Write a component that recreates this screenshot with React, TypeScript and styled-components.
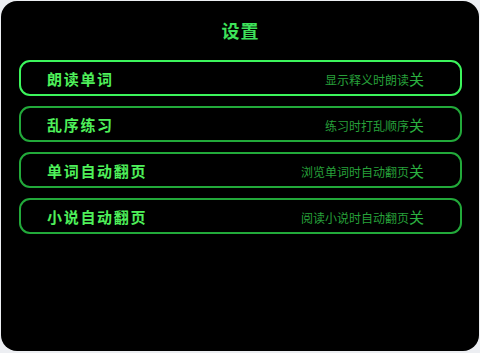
import React from "react";
import styled, { createGlobalStyle } from "styled-components";

const Global = createGlobalStyle`
  html, body { margin: 0; padding: 0; background: #eceef2; }
  body { font-family: "Noto Sans CJK SC", "Noto Sans", sans-serif; }
`;

const Panel = styled.div`
  box-sizing: border-box;
  margin: 1px;
  width: 478px;
  height: 350px;
  background: #000;
  border-radius: 16px;
  padding: 16px 17px 0 18px;
  display: flex;
  flex-direction: column;
`;

const Title = styled.h1`
  margin: 0 0 17px 0;
  text-align: center;
  font-size: 18px;
  line-height: 26px;
  font-weight: 700;
  letter-spacing: 1px;
  color: #3ee25a;
`;

const List = styled.div`
  display: flex;
  flex-direction: column;
  gap: 10px;
`;

const Row = styled.div<{ $active?: boolean }>`
  box-sizing: border-box;
  height: 36px;
  border: 2px solid ${(p) => (p.$active ? "#3cf55c" : "#22a93a")};
  border-radius: 11px;
  display: flex;
  align-items: center;
  justify-content: space-between;
  padding: 0 36px 0 26px;
`;

const Label = styled.span`
  font-size: 15px;
  font-weight: 700;
  color: #4ef05a;
  letter-spacing: 1.7px;
`;

const Desc = styled.span`
  font-size: 12px;
  color: #27a03a;
  display: flex;
  align-items: baseline;
`;

const State = styled.span`
  font-size: 15px;
  color: #2bb040;
`;

const items = [
  { label: "朗读单词", desc: "显示释义时朗读" },
  { label: "乱序练习", desc: "练习时打乱顺序" },
  { label: "单词自动翻页", desc: "浏览单词时自动翻页" },
  { label: "小说自动翻页", desc: "阅读小说时自动翻页" },
];

export default function App() {
  return (
    <>
      <Global />
      <Panel>
        <Title>设置</Title>
        <List>
          {items.map((it, i) => (
            <Row key={it.label} $active={i === 0}>
              <Label>{it.label}</Label>
              <Desc>
                {it.desc}
                <State>关</State>
              </Desc>
            </Row>
          ))}
        </List>
      </Panel>
    </>
  );
}
